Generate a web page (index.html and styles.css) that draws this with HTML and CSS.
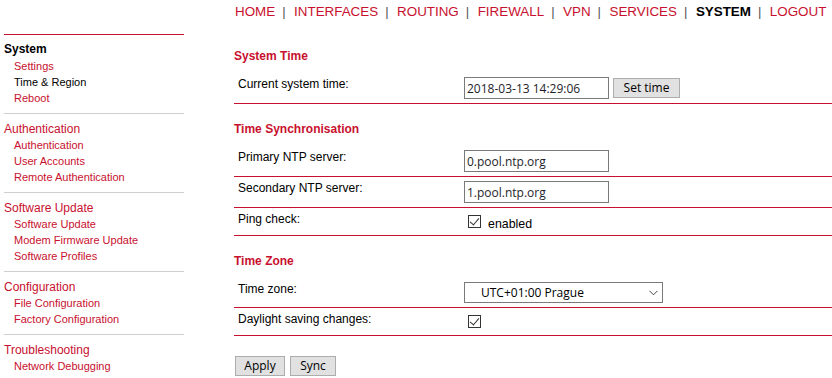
FILE: index.html
```html
<!DOCTYPE html>
<html lang="en">
<head>
<meta charset="utf-8">
<title>Time &amp; Region</title>
<link rel="stylesheet" href="styles.css">
</head>
<body>
<div class="page">
  <aside class="sidebar">
    <div class="group first">
      <div class="group-title active">System</div>
      <a class="item" href="#">Settings</a>
      <a class="item current" href="#">Time &amp; Region</a>
      <a class="item" href="#">Reboot</a>
    </div>
    <div class="group">
      <div class="group-title">Authentication</div>
      <a class="item" href="#">Authentication</a>
      <a class="item" href="#">User Accounts</a>
      <a class="item" href="#">Remote Authentication</a>
    </div>
    <div class="group">
      <div class="group-title">Software Update</div>
      <a class="item" href="#">Software Update</a>
      <a class="item" href="#">Modem Firmware Update</a>
      <a class="item" href="#">Software Profiles</a>
    </div>
    <div class="group">
      <div class="group-title">Configuration</div>
      <a class="item" href="#">File Configuration</a>
      <a class="item" href="#">Factory Configuration</a>
    </div>
    <div class="group">
      <div class="group-title">Troubleshooting</div>
      <a class="item" href="#">Network Debugging</a>
      <a class="item" href="#">System Debugging</a>
    </div>
  </aside>

  <main class="main">
    <nav class="topnav">
      <a href="#">HOME</a><span class="sep">|</span>
      <a href="#">INTERFACES</a><span class="sep">|</span>
      <a href="#">ROUTING</a><span class="sep">|</span>
      <a href="#">FIREWALL</a><span class="sep">|</span>
      <a href="#">VPN</a><span class="sep">|</span>
      <a href="#">SERVICES</a><span class="sep">|</span>
      <a href="#" class="on">SYSTEM</a><span class="sep">|</span>
      <a href="#">LOGOUT</a>
    </nav>

    <section class="section">
      <h2 class="section-title">System Time</h2>
      <div class="row">
        <div class="label">Current system time:</div>
        <div class="field">
          <input class="text" type="text" value="2018-03-13 14:29:06">
          <button class="btn btn-set" type="button">Set time</button>
        </div>
      </div>
    </section>

    <section class="section">
      <h2 class="section-title">Time Synchronisation</h2>
      <div class="row">
        <div class="label">Primary NTP server:</div>
        <div class="field"><input class="text" type="text" value="0.pool.ntp.org"></div>
      </div>
      <div class="row">
        <div class="label">Secondary NTP server:</div>
        <div class="field"><input class="text" type="text" value="1.pool.ntp.org"></div>
      </div>
      <div class="row">
        <div class="label">Ping check:</div>
        <div class="field"><label class="check"><input class="cb" type="checkbox" checked><span class="cb-text">enabled</span></label></div>
      </div>
    </section>

    <section class="section">
      <h2 class="section-title">Time Zone</h2>
      <div class="row">
        <div class="label">Time zone:</div>
        <div class="field">
          <div class="select-wrap">
            <select class="select"><option>UTC+01:00 Prague</option></select>
            <svg class="chev" width="9" height="6" viewBox="0 0 9 6"><path d="M0.5 0.8 L4.5 4.8 L8.5 0.8" fill="none" stroke="#444" stroke-width="1"/></svg>
          </div>
        </div>
      </div>
      <div class="row">
        <div class="label">Daylight saving changes:</div>
        <div class="field"><input class="cb" type="checkbox" checked></div>
      </div>
    </section>

    <div class="actions">
      <button class="btn btn-apply" type="button">Apply</button>
      <button class="btn btn-sync" type="button">Sync</button>
    </div>
  </main>
</div>
</body>
</html>
```

FILE: styles.css
```css
html, body {
  margin: 0;
  padding: 0;
  background: #fff;
}
body {
  font-family: "Liberation Sans", Arial, sans-serif;
  color: #000;
  overflow: hidden;
}
a {
  text-decoration: none;
  color: #c8102e;
}
.page {
  display: flex;
  align-items: flex-start;
}

/* sidebar */
.sidebar {
  width: 180px;
  margin: 34px 0 0 4px;
  border-top: 1px solid #c8102e;
  flex: none;
}
.group {
  display: flex;
  flex-direction: column;
  padding: 7px 0 7px;
  border-bottom: 1px solid #cfcfcf;
}
.group.first {
  padding-top: 6px;
}
.group.first .group-title {
  margin-bottom: 1px;
}
.group-title {
  font-size: 12px;
  line-height: 16px;
  color: #c8102e;
}
.group-title.active {
  color: #000;
  font-weight: bold;
}
.item {
  font-size: 11px;
  line-height: 16px;
  padding-left: 10px;
  color: #c8102e;
}
.item.current {
  color: #000;
}

/* main */
.main {
  flex: 1;
  margin-left: 50px;
  min-width: 0;
}
.topnav {
  display: flex;
  align-items: center;
  font-size: 13.4px;
  line-height: 16px;
  padding: 4px 0 11px 1px;
  white-space: nowrap;
}
.topnav a {
  color: #c8102e;
}
.topnav a.on {
  color: #000;
  font-weight: bold;
}
.sep {
  color: #555;
  margin: 0 8.5px 0 7px;
  font-size: 13px;
}
.section-title {
  margin: 17px 0 9px;
  font-size: 12px;
  line-height: 16px;
  font-weight: bold;
  color: #c8102e;
}
.row {
  display: grid;
  grid-template-columns: 226px 1fr;
  padding: 4px 0 4px 4px;
  border-bottom: 1px solid #c8102e;
}
.label {
  font-size: 12px;
  line-height: 14px;
}
.field {
  display: flex;
  align-items: center;
}
.text {
  box-sizing: border-box;
  width: 145px;
  height: 22px;
  margin: 0;
  padding: 0 2px;
  border: 1px solid #7a7a7a;
  font-family: "Open Sans", "Noto Sans", sans-serif;
  font-size: 12px;
  color: #1e1e2a;
  background: #fff;
  outline: none;
}
.btn {
  box-sizing: border-box;
  height: 20px;
  margin: 0;
  padding: 0;
  border: 1px solid #adadad;
  background: #e1e1e1;
  font-family: "Open Sans", "Noto Sans", sans-serif;
  font-size: 12px;
  line-height: 16px;
  color: #000;
}
.btn-set {
  width: 67px;
  margin-left: 4px;
}
.check {
  display: flex;
  align-items: center;
}
.cb {
  appearance: none;
  -webkit-appearance: none;
  box-sizing: border-box;
  width: 13px;
  height: 13px;
  margin: 3px 3px 3px 4px;
  border: 1px solid #333;
  background: #fff;
  position: relative;
  flex: none;
}
.cb:checked::after {
  content: "";
  position: absolute;
  left: 3px;
  top: 0px;
  width: 4px;
  height: 8px;
  border-right: 1.3px solid #333;
  border-bottom: 1.3px solid #333;
  transform: rotate(40deg);
}
.cb-text {
  font-size: 12.4px;
  line-height: 14px;
  margin-left: 4px;
  padding-top: 4px;
}
.select-wrap {
  position: relative;
  width: 199px;
  height: 21px;
}
.select {
  appearance: none;
  -webkit-appearance: none;
  box-sizing: border-box;
  width: 199px;
  height: 21px;
  margin: 0;
  padding: 0 0 0 16px;
  border: 1px solid #7a7a7a;
  border-radius: 0;
  background: #fff;
  font-family: "Open Sans", "Noto Sans", sans-serif;
  font-size: 12px;
  color: #000;
  outline: none;
}
.chev {
  position: absolute;
  right: 5px;
  top: 8px;
  pointer-events: none;
}
.actions {
  display: flex;
  gap: 5px;
  margin: 20px 0 0 1px;
}
.btn-apply {
  width: 50px;
}
.btn-sync {
  width: 46px;
}
```
